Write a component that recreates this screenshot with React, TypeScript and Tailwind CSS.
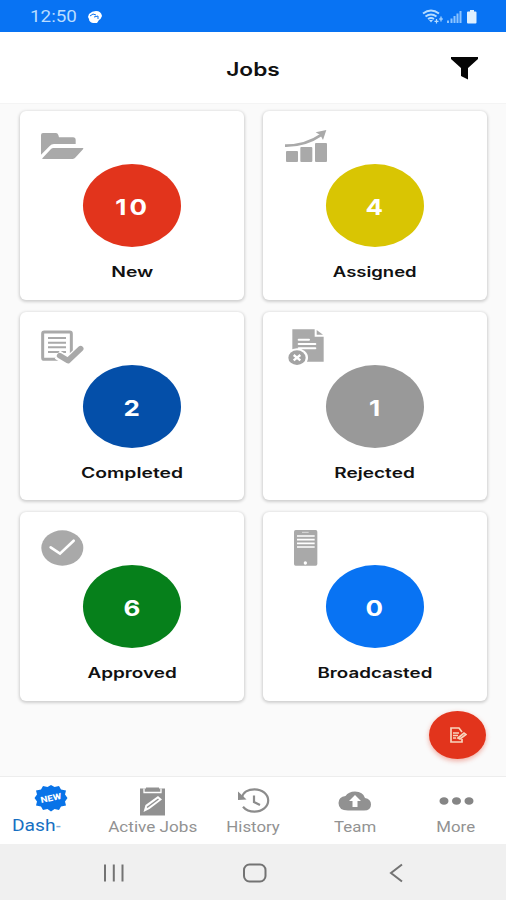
import type { ReactNode } from "react";

type Job = {
  label: string;
  count: number;
  color: string;
  labelScale: string;
  icon: ReactNode;
};

const FolderIcon = () => (
  <g fill="#a9a9a9">
    <path d="M3 18q0-6 6-6h39q5 0 7 6l2 7h42q8 0 8 8v12H42q-8 0-13 6L3 77z" />
    <path d="M7 88 33 60q3-3 8-3h87q4 0 1 4l-22 24q-4 5-9 5H9q-4 0-2-2z" />
  </g>
);

const GrowthIcon = () => (
  <g fill="#a9a9a9">
    <rect x="9" y="66" width="36" height="33" rx="3" />
    <rect x="52" y="54" width="36" height="45" rx="3" />
    <rect x="96" y="42" width="36" height="57" rx="3" />
    <path d="M6 50Q67 51 116 17" fill="none" stroke="#a9a9a9" strokeWidth="8" />
    <path d="M130 3 98 10l14 8 8 15z" />
  </g>
);

const ListCheckIcon = () => (
  <g fill="none" stroke="#a9a9a9">
    <rect x="8" y="6" width="86" height="82" rx="5" strokeWidth="9" />
    <path d="M24 24h54M24 38h54M24 52h54M24 66h54" strokeWidth="6" />
    <path d="M52 74 84 94 128 54" stroke="#fff" strokeWidth="29" />
    <path d="m59 77 25 15 38-36" strokeWidth="17" strokeLinejoin="round" strokeLinecap="round" />
  </g>
);

const FileRejectIcon = () => (
  <g>
    <path d="M28-2h67v22h27v75H28z" fill="#a9a9a9" />
    <path d="M101 0v14h19z" fill="#a9a9a9" />
    <path d="M47 29h31M47 42h50M47 55h50" stroke="#fff" strokeWidth="6" strokeLinecap="round" />
    <ellipse cx="42" cy="83" rx="33" ry="28" fill="#fff" />
    <ellipse cx="42" cy="83" rx="26" ry="22" fill="#a3a3a3" />
    <path d="m32 75 20 16M52 75 32 91" stroke="#fff" strokeWidth="7" />
  </g>
);

const CheckIcon = () => (
  <g>
    <ellipse cx="67" cy="54" rx="63" ry="53" fill="#a9a9a9" />
    <path d="m32 52 28 19 41-39" fill="none" stroke="#fff" strokeWidth="8" strokeLinecap="round" />
  </g>
);

const PhoneIcon = () => (
  <g>
    <rect x="33" y="0" width="70" height="107" rx="5" fill="#a9a9a9" />
    <path d="M42 18h53M42 29h53M42 40h53M42 51h53" stroke="#fff" strokeWidth="5" />
    <path d="M57 7h20" stroke="#ddd" strokeWidth="3" />
    <ellipse cx="67" cy="99" rx="5" ry="5" fill="#fff" />
  </g>
);

const jobs: Job[] = [
  { label: "New", count: 10, color: "bg-[#e2341c]", labelScale: "scale-x-[1.38]", icon: <FolderIcon /> },
  { label: "Assigned", count: 4, color: "bg-[#d9c503]", labelScale: "scale-x-[1.32]", icon: <GrowthIcon /> },
  { label: "Completed", count: 2, color: "bg-[#044fa9]", labelScale: "scale-x-[1.38]", icon: <ListCheckIcon /> },
  { label: "Rejected", count: 1, color: "bg-[#999999]", labelScale: "scale-x-[1.36]", icon: <FileRejectIcon /> },
  { label: "Approved", count: 6, color: "bg-[#06801b]", labelScale: "scale-x-[1.35]", icon: <CheckIcon /> },
  { label: "Broadcasted", count: 0, color: "bg-[#0873f3]", labelScale: "scale-x-[1.34]", icon: <PhoneIcon /> },
];

function JobCard({ job }: { job: Job }) {
  return (
    <div className="relative flex flex-col items-center rounded-md bg-white pt-[53px] shadow-[0_1px_3px_1px_rgba(0,0,0,0.17)]">
      <svg className="absolute left-5 top-[18px] h-10 w-12 overflow-visible" viewBox="0 0 144 120">
        {job.icon}
      </svg>
      <div className={`flex h-[83px] w-[98px] items-center justify-center rounded-[50%] ${job.color}`}>
        <span className="-mr-0.5 mt-[3px] scale-x-[1.18] text-[22px] font-bold leading-none tracking-[2.5px] text-white">
          {job.count}
        </span>
      </div>
      <span className={`mt-[15px] text-[14px] font-semibold leading-5 text-[#111] ${job.labelScale}`}>
        {job.label}
      </span>
    </div>
  );
}

function StatusBar() {
  return (
    <div className="flex h-8 items-center bg-[#0873f3] pl-[30px] pr-7 pt-0.5">
      <span className="w-[47px] origin-left scale-x-[1.14] font-[Roboto,sans-serif] text-[16.5px] leading-none text-[#b9dcff]">
        12:50
      </span>
      <svg className="ml-[11px] h-3 w-[14px]" viewBox="0 0 14 12">
        <path d="M1 3Q4 0 8 0q5 0 6 5-1 3-3 4l-2 3H5Q1 11 1 8L0 6z" fill="#fff" />
        <path d="m2 5 3-2 3 1M6 6l4-1v3" fill="none" stroke="#0873f3" strokeWidth="1" />
      </svg>
      <svg className="ml-auto h-4 w-[56px]" viewBox="0 0 56 16">
        <g fill="none" stroke="#b5dcff">
          <path d="M1 4.500q8-6 16 0" strokeWidth="2" />
          <path d="M3.500 7.500q5.500-4 11 0" strokeWidth="2" />
          <path d="M6 10q3-2 6 0" strokeWidth="1.800" />
          <path d="M14.500 10v4.500M12.500 12.300h4M19 7.500v5M17 10h4" strokeWidth="1.200" />
        </g>
        <path d="M7 11h4l-2 2.500z" fill="#b5dcff" />
        <path d="M26 14v-2.500M29.500 14V9.500M32.500 14V7M35.500 14V4.500M38.500 14V2" stroke="#8cc4ff" strokeWidth="2" />
        <path d="M45 3.500q0-1 1-1h2V1h4v1.500h1.500q1 0 1 1v10q0 1-1 1H46q-1 0-1-1z" fill="#dff0ff" />
      </svg>
    </div>
  );
}

function Header() {
  return (
    <header className="grid h-[72px] grid-cols-3 items-center border-b border-[#f4f4f4] bg-white px-7">
      <h1 className="col-start-2 mt-[3px] scale-x-[1.26] text-center text-[18px] font-semibold text-[#111]">Jobs</h1>
      <svg className="ml-auto mt-px h-[23px] w-[27px]" viewBox="0 0 27 23">
        <path d="M0 0h27v2L17 11v11.500L10 19v-8L0 2z" fill="#050505" />
      </svg>
    </header>
  );
}

const navItems = [
  {
    label: "Active Jobs",
    scale: "scale-x-[1.18]",
    icon: (
      <>
        <path d="M11 1.500h6V.5h13v1h6v27H11z" fill="#919191" />
        <path d="M15 1.500v4h17v-4" fill="none" stroke="#fff" strokeWidth="1.300" />
        <path d="m14.500 25 2-7 12.500-9 4 3.500L20.500 22z" fill="#fff" />
        <path d="m18 20.500 11.500-8.500" stroke="#919191" strokeWidth="1.500" />
      </>
    ),
  },
  {
    label: "History",
    scale: "scale-x-[1.16]",
    icon: (
      <>
        <path
          d="M12 10.500C13 5.500 18 2.300 24.500 2.300c8 0 13.700 5 13.700 11.200s-6 11.200-13.700 11.200c-5 0-9-2-11.500-5M24 8.500v6.500l6 3"
          fill="none"
          stroke="#8c8c8c"
          strokeWidth="2.200"
        />
        <path d="m8 4.500 8.500 8L8 13z" fill="#8c8c8c" />
      </>
    ),
  },
  {
    label: "Team",
    scale: "scale-x-[1.16]",
    icon: (
      <>
        <path d="M17 23.500q-9.500 0-9.500-7.500 0-6 7-7 3-4.500 9.500-4.500 8 0 10 6.500 6 1 6 6.500 0 6-7 6z" fill="#919191" />
        <path d="m24 8 6 6h-3.500v6h-5v-6H18z" fill="#fff" />
      </>
    ),
  },
  {
    label: "More",
    scale: "scale-x-[1.16]",
    icon: (
      <g fill="#858585">
        <ellipse cx="12" cy="14" rx="4.500" ry="3.800" />
        <ellipse cx="24.500" cy="14" rx="4.500" ry="3.800" />
        <ellipse cx="37" cy="14" rx="4.500" ry="3.800" />
      </g>
    ),
  },
];

function BottomNav() {
  return (
    <nav className="grid h-[68px] grid-cols-5 border-t border-[#ededed] bg-white pt-2.5 font-[Roboto,sans-serif] text-[14.5px] leading-5">
      <div className="flex flex-col items-center text-[#166fc2]">
        <svg className="h-[30px] w-[47px] overflow-visible" viewBox="0 0 47 30">
          <path
            d="m24-2 3.500 2 4.500-1 2 3.500 5 1-1 4 2.500 3.500-2.500 3.500 1 4-5 1-2 3.500-4.500-1-3.500 2.500-3.500-2.500-4.500 1-2-3.500-5-1 1-4L7.500 11 10 7.500l-1-4 5-1L16-1l4.500 1z"
            fill="#0873e8"
          />
          <text
            x="24"
            y="14"
            textAnchor="middle"
            fontSize="8.5"
            fontWeight="800"
            fill="#fff"
            textLength="21"
            lengthAdjust="spacingAndGlyphs"
            transform="rotate(-12 24 11)"
          >
            NEW
          </text>
        </svg>
        <span className="-mt-px w-full origin-left scale-x-[1.2] pl-2.5 text-[16px]">
          Dash<span className="text-xs font-bold text-[#7fb0dc]">-</span>
        </span>
      </div>
      {navItems.map((item) => (
        <div key={item.label} className="flex flex-col items-center whitespace-nowrap pl-px text-[#929292]">
          <svg className="h-[30px] w-[47px]" viewBox="0 0 47 30">
            {item.icon}
          </svg>
          <span className={`mt-px ${item.scale}`}>{item.label}</span>
        </div>
      ))}
    </nav>
  );
}

function SystemBar() {
  return (
    <div className="flex h-14 items-center justify-between bg-[#f0f0f0] pl-[102px] pr-[98px] pt-0.5">
      <svg className="h-6 w-6" viewBox="0 0 24 24">
        <path d="M3 3.500v17M11.800 3.500v17M20.500 3.500v17" stroke="#737373" strokeWidth="2" />
      </svg>
      <svg className="h-6 w-6" viewBox="0 0 24 24">
        <rect x="1" y="3.500" width="21.500" height="17" rx="5.500" fill="none" stroke="#737373" strokeWidth="2" />
      </svg>
      <svg className="h-6 w-6" viewBox="0 0 24 24">
        <path d="M18 3.500 7 12l11 8.500" fill="none" stroke="#737373" strokeWidth="2" />
      </svg>
    </div>
  );
}

export default function App() {
  return (
    <div className="flex h-[900px] w-[506px] flex-col overflow-hidden bg-[#fafafa] font-[Inter,sans-serif]">
      <StatusBar />
      <Header />
      <main className="flex flex-1 flex-col px-5 pt-[7px]">
        <div className="grid h-[589.500px] w-[467px] shrink-0 grid-cols-2 grid-rows-3 gap-x-[19px] gap-y-3">
          {jobs.map((job) => (
            <JobCard key={job.label} job={job} />
          ))}
        </div>
        <button className="ml-auto mt-[10px] flex h-12 w-[57px] shrink-0 items-center justify-center rounded-[50%] bg-[#e2341c] shadow-[0_2px_5px_rgba(226,52,28,0.4)]">
          <svg className="h-4 w-[18px]" viewBox="0 0 18 16">
            <g fill="none" stroke="#f7d5bd" strokeWidth="1.700">
              <path d="M13 5 10 1H2v14h11v-3" />
              <path d="M4 6h6M4 8.500h5M4 11h3" />
              <path d="m9 11 6-5 2 1.500L11 12z" />
            </g>
          </svg>
        </button>
      </main>
      <BottomNav />
      <SystemBar />
    </div>
  );
}
